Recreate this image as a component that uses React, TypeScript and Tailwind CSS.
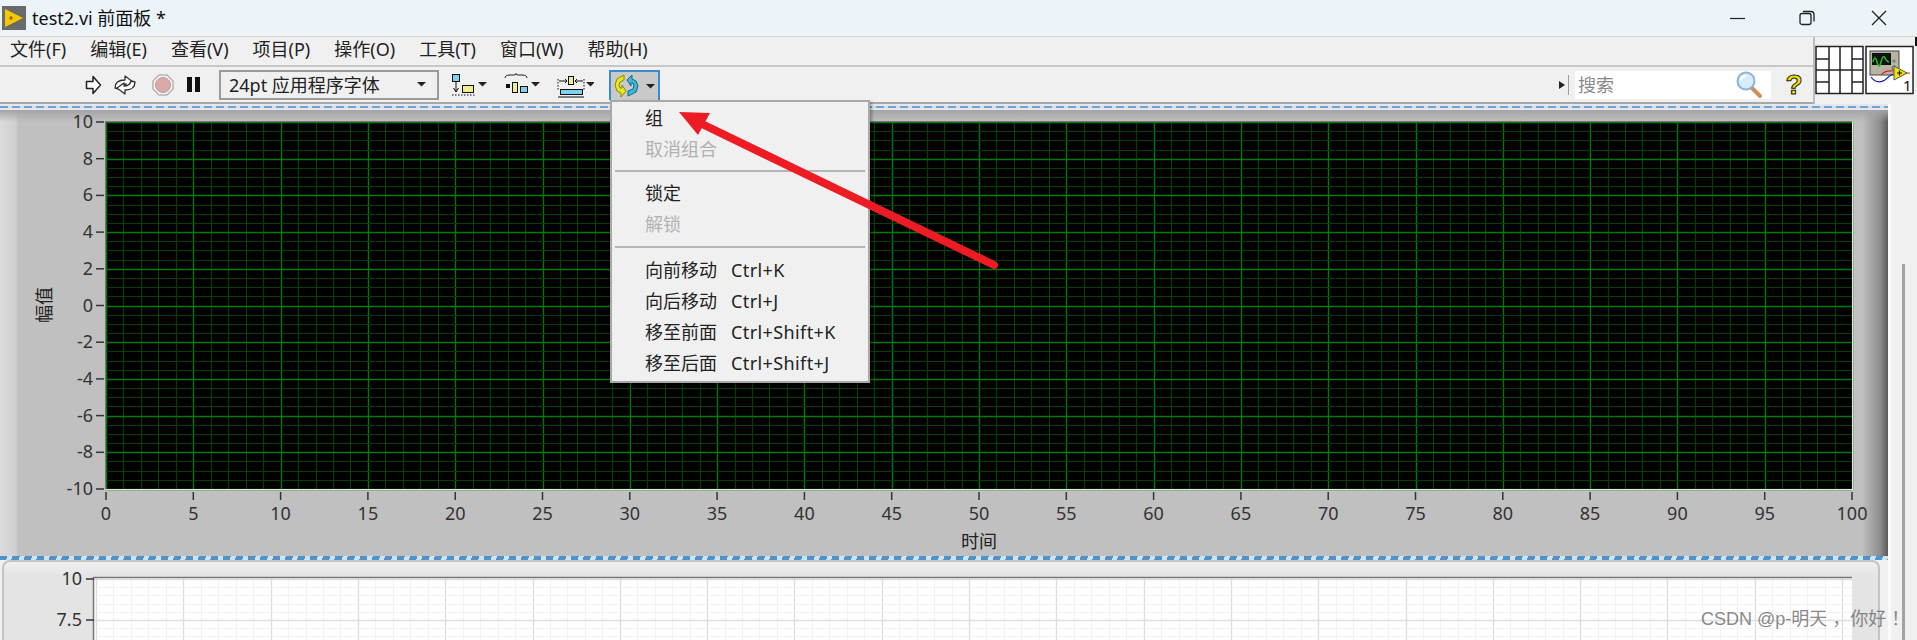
import React from "react";

const menus = ["文件(F)", "编辑(E)", "查看(V)", "项目(P)", "操作(O)", "工具(T)", "窗口(W)", "帮助(H)"];

type Entry = { label: string; keys?: string; off?: boolean };

const groupA: Entry[] = [{ label: "组" }, { label: "取消组合", off: true }];
const groupB: Entry[] = [{ label: "锁定" }, { label: "解锁", off: true }];
const groupC: Entry[] = [
  { label: "向前移动", keys: "Ctrl+K" },
  { label: "向后移动", keys: "Ctrl+J" },
  { label: "移至前面", keys: "Ctrl+Shift+K" },
  { label: "移至后面", keys: "Ctrl+Shift+J" },
];

function MenuRows({ items }: { items: Entry[] }) {
  return (
    <>
      {items.map((it) => (
        <div
          key={it.label}
          className={`flex h-[31px] items-center pl-[33px] ${it.off ? "text-[#b2b2b2]" : "text-[#222]"}`}
        >
          <span className="w-[86px]">{it.label}</span>
          {it.keys && <span className="tracking-[0.4px]">{it.keys}</span>}
        </div>
      ))}
    </>
  );
}

function Caret() {
  return <polygon points="0,0 9,0 4.5,4.5" fill="#222" />;
}

function RunIcon() {
  return (
    <svg width="17" height="22" viewBox="0 0 17 22">
      <path d="M1.5 7.500h6.500V2.500l7.500 8.500-7.500 8.500v-5H1.500z" fill="#fff" stroke="#222" strokeWidth="1.5" strokeLinejoin="round" />
    </svg>
  );
}

function RepeatIcon() {
  return (
    <svg width="24" height="22" viewBox="0 0 24 22" fill="#fff" stroke="#333" strokeWidth="1.3" strokeLinejoin="round">
      <path d="M2 14 C2 8 6 6 12 6 V2 L20 8 L13 13 V10 C9 10 7 11 6 15 Z" />
      <path d="M22 8 C22 14 18 16 12 16 V20 L4 14 L11 9 V12 C15 12 17 11 18 7 Z" />
    </svg>
  );
}

function AbortIcon() {
  return (
    <svg width="22" height="22" viewBox="0 0 22 22">
      <polygon points="7,1 15,1 21,7 21,15 15,21 7,21 1,15 1,7" fill="#f4f4f4" stroke="#b4b4b4" strokeWidth="1.5" />
      <circle cx="11" cy="11" r="7.5" fill="#d9aaaa" stroke="#c69696" />
    </svg>
  );
}

function AlignIcon() {
  return (
    <svg width="36" height="28" viewBox="0 0 36 28">
      <rect x="0.5" y="3.500" width="7" height="7" fill="#7fd2ee" stroke="#111" />
      <path d="M4 11v10M1.500 17l2.500 4 2.500-4" stroke="#111" fill="none" />
      <rect x="10.500" y="14.500" width="11" height="7" fill="#f3ee8c" stroke="#111" />
      <path d="M0 24h23" stroke="#111" strokeDasharray="1.5 1.5" />
      <g transform="translate(26 11)">
        <Caret />
      </g>
    </svg>
  );
}

function DistributeIcon() {
  return (
    <svg width="36" height="28" viewBox="0 0 36 28">
      <path d="M1 7 q0-3 5-3 h5 l1-1.500 1 1.500 h5 q5 0 5 3" stroke="#222" fill="none" />
      <rect x="2" y="13" width="4" height="4" fill="#111" />
      <rect x="8.500" y="11.500" width="5" height="10" fill="#f3ee8c" stroke="#111" />
      <rect x="16.500" y="15.500" width="7" height="6" fill="#7fd2ee" stroke="#111" />
      <g transform="translate(27 11)">
        <Caret />
      </g>
    </svg>
  );
}

function ResizeIcon() {
  return (
    <svg width="37" height="28" viewBox="0 0 37 28">
      <path d="M1 8v11M27 8v11" stroke="#111" strokeDasharray="1.5 1.5" />
      <rect x="11.500" y="5.500" width="5" height="8" fill="#f3ee8c" stroke="#111" />
      <path d="M2 10h8M8 8l2 2-2 2M26 10h-8M20 8l-2 2 2 2" stroke="#111" fill="none" />
      <rect x="3.500" y="18.500" width="22" height="5" fill="#7fd2ee" stroke="#111" />
      <path d="M1 26h26" stroke="#111" />
      <g transform="translate(29 11)">
        <Caret />
      </g>
    </svg>
  );
}

function ReorderButton() {
  return (
    <div className="ml-[15px] flex h-[30px] w-[51px] items-center border-2 border-b-0 border-[#3a8ccc] bg-[#c9c9c9] pl-[3px]">
      <svg width="44" height="24" viewBox="0 0 44 24">
        <path d="M10 1 L10 6 L6 8 L5 11 L6 14 L8 14 V11 L12 17 L7 23 V19 L3 17 L1 11 L3 5 Z" fill="#e8e81a" stroke="#8a8a00" strokeWidth="1" strokeLinejoin="round" />
        <path d="M14 22 V17 L19 15 L20 12 L19 9 L17 9 V12 L13 6 L18 1 V5 L22 7 L24 12 L22 18 Z" fill="#3fb8d8" stroke="#0f6a80" strokeWidth="1" strokeLinejoin="round" />
        <g transform="translate(32 10)">
          <Caret />
        </g>
      </svg>
    </div>
  );
}

function Magnifier() {
  return (
    <svg width="28" height="28" viewBox="0 0 28 28">
      <path d="M15 15 L25 25" stroke="#c99358" strokeWidth="4" strokeLinecap="round" />
      <circle cx="11" cy="10" r="8.500" fill="#d8ecfa" stroke="#8db4d4" strokeWidth="2" />
      <path d="M6 9 a5 5 0 0 1 5-4" stroke="#fff" strokeWidth="2" fill="none" />
    </svg>
  );
}

// connector pane and VI icon, coordinates start at the pane's top-left
function ConnectorPane() {
  return (
    <svg width="102" height="67" viewBox="0 0 102 67" className="block">
      <rect x="100" y="0" width="2" height="9" fill="#111" />
      <rect x="1" y="9.500" width="47" height="47" fill="#fff" stroke="#222" strokeWidth="1.5" />
      <path d="M14 9v47M25 9v47M37 9v47M1 33h47M1 22h13M1 45h13M37 22h11M37 45h11" stroke="#222" strokeWidth="1.5" fill="none" />
      <rect x="51" y="9.500" width="47" height="47" fill="#fff" stroke="#222" strokeWidth="1.5" />
      <rect x="55" y="14" width="29" height="24" fill="#b8b4a4" stroke="#444" />
      <rect x="57" y="16" width="19" height="12" fill="#111" />
      <path d="M58 25 q2-8 4 0 t4 0 t4-4 t4 4" stroke="#1fc21f" strokeWidth="1.5" fill="none" />
      <circle cx="79" cy="24" r="1.500" fill="#777" />
      <circle cx="79" cy="31" r="2" fill="#dcdcdc" stroke="#555" />
      <path d="M56 40 q6 8 14 3 q4-4 8-6" stroke="#1a1ab0" strokeWidth="1.2" fill="none" />
      <path d="M66 38 q4-5 12-4 M90 36 h5" stroke="#e02020" strokeWidth="1.2" fill="none" />
      <polygon points="79,29 92,36 79,43" fill="#f2e500" stroke="#555" />
      <path d="M82 36h5M84.500 33.500v5" stroke="#111" strokeWidth="1.2" />
      <text x="88" y="54" fontSize="15" fill="#111">1</text>
    </svg>
  );
}

const PLOT = { left: 106, right: 1852, top: 12, bottom: 379 };
const xStep = (PLOT.right - PLOT.left) / 100;
const yStep = (PLOT.bottom - PLOT.top) / 20;
const ints = (n: number) => Array.from({ length: n }, (_, i) => i);

function MainChart() {
  return (
    <svg width="1888" height="446" viewBox="0 0 1888 446" className="block">
      <rect x={PLOT.left} y={PLOT.top} width={PLOT.right - PLOT.left} height={PLOT.bottom - PLOT.top} fill="#000" />
      {ints(101).map((i) => {
        const x = Math.round(PLOT.left + i * xStep) + 0.5;
        return (
          <line key={i} x1={x} x2={x} y1={PLOT.top} y2={PLOT.bottom} stroke={i % 5 === 0 ? "#007a00" : "#053f05"} strokeWidth={i % 5 === 0 ? 1.4 : 1.2} />
        );
      })}
      {ints(41).map((i) => {
        const y = Math.round(PLOT.top + (i * yStep) / 2) + 0.5;
        return (
          <line key={i} x1={PLOT.left} x2={PLOT.right} y1={y} y2={y} stroke={i % 4 === 0 ? "#007a00" : "#053f05"} strokeWidth={i % 4 === 0 ? 1.4 : 1.2} />
        );
      })}
      <path d={`M${PLOT.left - 0.5} ${PLOT.bottom}V${PLOT.top - 0.5}H${PLOT.right}`} stroke="#777" fill="none" />
      <path d={`M${PLOT.left} ${PLOT.bottom + 0.5}H${PLOT.right + 0.5}V${PLOT.top}`} stroke="#e4e4e4" fill="none" />
      <g className="fill-[#333] text-[18px]">
        {ints(11).map((i) => {
          const y = PLOT.top + i * yStep * 2;
          return (
            <g key={i}>
              <line x1="96" x2="104" y1={y} y2={y} stroke="#333" strokeWidth="1.5" />
              <text x="93" y={y + 6} textAnchor="end">
                {10 - i * 2}
              </text>
            </g>
          );
        })}
        {ints(21).map((i) => {
          const x = PLOT.left + i * 5 * xStep;
          return (
            <g key={i}>
              <line x1={x} x2={x} y1="382" y2="390" stroke="#333" strokeWidth="1.5" />
              <text x={x} y="410" textAnchor="middle">
                {i * 5}
              </text>
            </g>
          );
        })}
        <text x="979" y="438" textAnchor="middle" className="fill-[#222]">
          时间
        </text>
        <text x="45" y="201" textAnchor="middle" transform="rotate(-90 45 195)" className="fill-[#222]">
          幅值
        </text>
      </g>
    </svg>
  );
}

function LowerChart() {
  const left = 90;
  const right = 1848;
  const top = 16;
  return (
    <svg width="1876" height="78" viewBox="0 0 1876 78" className="block">
      <rect x={left} y={top} width={right - left} height="62" fill="#fff" />
      {ints(101).map((i) => {
        const x = Math.round(left + 2 + i * 17.46) + 0.5;
        return <line key={i} x1={x} x2={x} y1={top} y2="78" stroke={i % 5 === 0 ? "#dedede" : "#f3f3f3"} strokeWidth={i % 5 === 0 ? 1.4 : 1.2} />;
      })}
      {ints(8).map((i) => {
        const y = Math.round(top + 1 + i * 8.2) + 0.5;
        return <line key={i} x1={left} x2={right} y1={y} y2={y} stroke={i % 5 === 0 ? "#dedede" : "#f3f3f3"} strokeWidth={i % 5 === 0 ? 1.4 : 1.2} />;
      })}
      <path d={`M${left - 0.5} 78V${top - 0.5}H${right}`} stroke="#777" strokeWidth="1.5" fill="none" />
      <g className="fill-[#333] text-[18px]">
        <line x1="82" x2="90" y1="17" y2="17" stroke="#333" strokeWidth="1.5" />
        <text x="78" y="23" textAnchor="end">
          10
        </text>
        <line x1="82" x2="90" y1="58" y2="58" stroke="#333" strokeWidth="1.5" />
        <text x="78" y="64" textAnchor="end">
          7.5
        </text>
      </g>
    </svg>
  );
}

export default function App() {
  return (
    <div className="relative flex h-[640px] w-[1917px] flex-col overflow-hidden bg-[#f0f0f0] font-['Noto_Sans','Noto_Sans_CJK_SC',sans-serif] text-[18px] leading-none text-[#222]">
      {/* title bar */}
      <div className="flex h-[36px] shrink-0 items-center bg-[#ecf3f9] pl-[2px]">
        <svg width="24" height="24" viewBox="0 0 24 24">
          <rect width="24" height="24" fill="#6a6a6a" />
          <polygon points="3,3 21,12 3,21" fill="#f6c800" />
          <path d="M7 12h4M9 10v4" stroke="#7a5a00" strokeWidth="1.2" />
        </svg>
        <span className="ml-[6px] text-[#111]">test2.vi 前面板 *</span>
        <div className="ml-auto flex items-center">
          <svg width="16" height="16" viewBox="0 0 16 16" className="mr-[53px]">
            <path d="M0 8.500h15" stroke="#222" strokeWidth="1.2" />
          </svg>
          <svg width="16" height="16" viewBox="0 0 16 16" className="mr-[56px]">
            <rect x="1" y="3.500" width="11" height="11" rx="2" fill="none" stroke="#222" strokeWidth="1.3" />
            <path d="M4 1.500h8a3 3 0 0 1 3 3v7" fill="none" stroke="#222" strokeWidth="1.3" />
          </svg>
          <svg width="16" height="16" viewBox="0 0 16 16" className="mr-[30px]">
            <path d="M1 1l14 14M15 1L1 15" stroke="#222" strokeWidth="1.3" />
          </svg>
        </div>
      </div>

      {/* menu + toolbar + connector pane */}
      <div className="flex h-[68px] shrink-0 border-t border-[#d6d6d6]">
        <div className="flex w-[1813px] flex-col">
          <div className="flex h-[30px] shrink-0 items-center gap-[24px] border-b-2 border-[#c8c8c8] pb-[4px] pl-[10px]">
            {menus.map((m) => (
              <span key={m}>{m}</span>
            ))}
          </div>
          <div className="flex min-h-0 flex-1 items-center border-b-2 border-[#a6a6a6] pl-[85px]">
            <RunIcon />
            <div className="ml-[11px]">
              <RepeatIcon />
            </div>
            <div className="ml-[15px]">
              <AbortIcon />
            </div>
            <div className="ml-[13px] flex h-[15px] w-[14px] gap-[3px]">
              <div className="w-[5px] bg-[#111]" />
              <div className="w-[5px] bg-[#111]" />
            </div>
            <div className="ml-[18px] flex h-[30px] w-[220px] items-center border-2 border-[#9a9a9a] pl-[8px] pr-[11px]">
              <span>24pt 应用程序字体</span>
              <svg width="9" height="5" viewBox="0 0 9 5" className="ml-auto">
                <Caret />
              </svg>
            </div>
            <div className="ml-[13px]">
              <AlignIcon />
            </div>
            <div className="ml-[16px]">
              <DistributeIcon />
            </div>
            <div className="ml-[17px]">
              <ResizeIcon />
            </div>
            <ReorderButton />
            <div className="ml-auto flex items-center pr-[9px]">
              <svg width="6" height="8" viewBox="0 0 6 8">
                <polygon points="0,0 6,4 0,8" fill="#222" />
              </svg>
              <div className="ml-[3px] h-[20px] w-px bg-[#a0a0a0]" />
              <div className="ml-[6px] flex h-[28px] w-[196px] items-center bg-white pl-[3px] pr-[8px] text-[#888]">
                <span>搜索</span>
                <div className="ml-auto">
                  <Magnifier />
                </div>
              </div>
              <span className="ml-[13px] w-[20px] text-center font-['Liberation_Sans',sans-serif] text-[28px] font-bold text-[#f4e300] [-webkit-text-stroke:1px_#222]">
                ?
              </span>
            </div>
          </div>
        </div>
        <div className="flex-1 border-l-2 border-[#bcbcbc]">
          <ConnectorPane />
        </div>
      </div>

      {/* panel area */}
      <div className="flex min-h-0 flex-1">
        <div className="flex w-[1888px] flex-col">
          <div className="flex h-[6px] shrink-0 items-center bg-[#e4e8ec]">
            <div className="h-[2px] w-full bg-[repeating-linear-gradient(90deg,#6ba3d2_0,#6ba3d2_8px,#d2dfea_8px,#d2dfea_12px)]" />
          </div>
          <div className="h-[446px] shrink-0 bg-[linear-gradient(180deg,#a4a4a4_0,rgba(192,192,192,0)_12px),linear-gradient(90deg,#dcdcdc_0,#cfcfcf_16px,#c0c0c0_18px,#c0c0c0_calc(100%-26px),#8e8e8e_calc(100%-8px),#5a5a5a_100%)]">
            <MainChart />
          </div>
          <div className="h-[4px] shrink-0 bg-[repeating-linear-gradient(105deg,#4f93c9_0,#4f93c9_7px,#cde2f2_7px,#cde2f2_12px)]" />
          <div className="min-h-0 flex-1 pl-[2px] pr-[8px]">
            <div className="h-full overflow-hidden rounded-t-[8px] border-2 border-b-0 border-[#c4c4c4] bg-[linear-gradient(180deg,#f0f0f0_0,#e4e4e4_14px)]">
              <LowerChart />
            </div>
          </div>
        </div>
        <div className="flex-1 border-l-[3px] border-[#fafafa] pl-[11px] pt-[160px]">
          <div className="h-full w-[3px] bg-[#a2a2a2]" />
        </div>
      </div>

      {/* group menu */}
      <div className="absolute left-[610px] top-[100px] h-[283px] w-[260px] border-2 border-[#a8a8a8] bg-[#f0f0f0] shadow-[2px_2px_3px_rgba(0,0,0,0.3)]">
        <MenuRows items={groupA} />
        <div className="flex h-[13px] items-center px-[3px]">
          <div className="h-[2px] w-full bg-[#b4b4b4]" />
        </div>
        <MenuRows items={groupB} />
        <div className="flex h-[15px] items-center px-[3px]">
          <div className="h-[2px] w-full bg-[#b4b4b4]" />
        </div>
        <MenuRows items={groupC} />
      </div>

      {/* annotation arrow */}
      <svg width="1917" height="640" viewBox="0 0 1917 640" className="pointer-events-none absolute left-0 top-0">
        <line x1="994" y1="265" x2="702" y2="124" stroke="#ed1c24" strokeWidth="8" strokeLinecap="round" />
        <polygon points="679,112 710,113 698,135" fill="#ed1c24" />
      </svg>

      {/* watermark */}
      <div className="absolute left-[1701px] top-[610px] whitespace-pre font-['Liberation_Sans','Noto_Sans_CJK_SC',sans-serif] text-[18px] text-[#6e6e6e] opacity-80">
        CSDN @p-明天 ，你好 ！
      </div>
    </div>
  );
}
